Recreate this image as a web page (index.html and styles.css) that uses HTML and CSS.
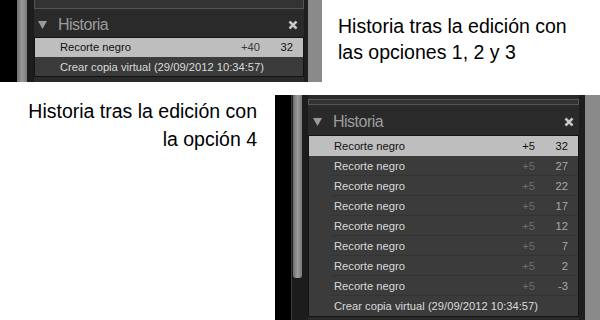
FILE: index.html
```html
<!DOCTYPE html>
<html lang="es">
<head>
    <meta charset="UTF-8">
    <meta name="viewport" content="width=device-width, initial-scale=1.0">
    <title>Historia</title>
    <link rel="stylesheet" href="styles.css">
</head>
<body>
    <div class="page">
        <div class="band band-top">
            <div class="shot shot-top">
                <div class="edge"></div>
                <div class="scroll"><div class="thumb"></div></div>
                <div class="panel">
                    <div class="prevbar"></div>
                    <div class="header">
                        <svg class="tri" width="9" height="8" viewBox="0 0 9 8"><polygon points="0,0 9,0 4.5,8" fill="#9a9a9a"/></svg>
                        <span class="title">Historia</span>
                        <svg class="close" width="10" height="10" viewBox="0 0 10 10"><path d="M1.5 1.5 L8.5 8.5 M8.5 1.5 L1.5 8.5" stroke="#555" stroke-width="3.4"/><path d="M1.5 1.5 L8.5 8.5 M8.5 1.5 L1.5 8.5" stroke="#cfcfcf" stroke-width="2.2"/></svg>
                    </div>
                    <div class="list">
                        <div class="row sel"><div class="cell"><span class="name">Recorte negro</span><span class="val">+40</span><span class="step">32</span></div></div>
                        <div class="row"><div class="cell last"><span class="name">Crear copia virtual (29/09/2012 10:34:57)</span></div></div>
                    </div>
                </div>
                <div class="side"></div>
            </div>
            <div class="caption">Historia tras la edición con<br>las opciones 1, 2 y 3</div>
        </div>

        <div class="band band-bottom">
            <div class="caption">Historia tras la edición con<br>la opción 4</div>
            <div class="shot shot-bottom">
                <div class="edge"></div>
                <div class="scroll"><div class="thumb"></div></div>
                <div class="panel">
                    <div class="prevbar"></div>
                    <div class="header">
                        <svg class="tri" width="9" height="8" viewBox="0 0 9 8"><polygon points="0,0 9,0 4.5,8" fill="#9a9a9a"/></svg>
                        <span class="title">Historia</span>
                        <svg class="close" width="10" height="10" viewBox="0 0 10 10"><path d="M1.5 1.5 L8.5 8.5 M8.5 1.5 L1.5 8.5" stroke="#555" stroke-width="3.4"/><path d="M1.5 1.5 L8.5 8.5 M8.5 1.5 L1.5 8.5" stroke="#cfcfcf" stroke-width="2.2"/></svg>
                    </div>
                    <div class="list">
                        <div class="row sel"><div class="cell"><span class="name">Recorte negro</span><span class="val">+5</span><span class="step">32</span></div></div>
                        <div class="row"><div class="cell"><span class="name">Recorte negro</span><span class="val">+5</span><span class="step">27</span></div></div>
                        <div class="row"><div class="cell"><span class="name">Recorte negro</span><span class="val">+5</span><span class="step">22</span></div></div>
                        <div class="row"><div class="cell"><span class="name">Recorte negro</span><span class="val">+5</span><span class="step">17</span></div></div>
                        <div class="row"><div class="cell"><span class="name">Recorte negro</span><span class="val">+5</span><span class="step">12</span></div></div>
                        <div class="row"><div class="cell"><span class="name">Recorte negro</span><span class="val">+5</span><span class="step">7</span></div></div>
                        <div class="row"><div class="cell"><span class="name">Recorte negro</span><span class="val">+5</span><span class="step">2</span></div></div>
                        <div class="row"><div class="cell"><span class="name">Recorte negro</span><span class="val">+5</span><span class="step">-3</span></div></div>
                        <div class="row"><div class="cell last"><span class="name">Crear copia virtual (29/09/2012 10:34:57)</span></div></div>
                    </div>
                </div>
                <div class="side"></div>
            </div>
        </div>
    </div>
</body>
</html>
```

FILE: styles.css
```css
body {
    margin: 0;
    background-color: #ffffff;
    font-family: "Liberation Sans", Arial, sans-serif;
}
.page {
    width: 600px;
    height: 320px;
    overflow: hidden;
}
.band {
    display: flex;
}
.band-top {
    height: 82px;
}
.band-bottom {
    height: 225px;
    margin-top: 13px;
}
.caption {
    font-size: 19.5px;
    color: #000000;
}
.band-top .caption {
    line-height: 26px;
    padding: 13px 0 0 16px;
}
.band-bottom .caption {
    width: 257px;
    flex: none;
    line-height: 28px;
    padding: 2px 18px 0 0;
    text-align: right;
}

/* captura de Lightroom */
.shot {
    display: flex;
    flex: none;
    background-color: #1e1e1e;
}
.edge {
    background-color: #000000;
}
.shot-top .edge {
    width: 17px;
}
.shot-bottom .edge {
    width: 16px;
}
.scroll {
    display: flex;
    flex: none;
    box-sizing: border-box;
    width: 17px;
    background-color: #1c1c1c;
}
.shot-top .scroll {
    padding-right: 7px;
}
.shot-bottom .scroll {
    border-left: 1px solid #3c3c3c;
    padding: 0 6px 0 1px;
}
.thumb {
    flex: 1;
    background: linear-gradient(to right, #6e6e6e, #9a9a9a 50%, #7a7a7a);
}
.shot-bottom .thumb {
    height: 183px;
    border-radius: 0 0 3px 3px;
}
.panel {
    display: flex;
    flex-direction: column;
    background-color: #2a2a2a;
}
.shot-top .panel {
    width: 270px;
}
.shot-bottom .panel {
    width: 271px;
    padding-top: 4px;
}
.prevbar {
    box-sizing: border-box;
    border: 1px solid #555555;
    background-color: #333333;
}
.shot-top .prevbar {
    height: 9px;
    border-top: none;
}
.shot-bottom .prevbar {
    height: 6px;
}
.header {
    display: flex;
    align-items: center;
    box-sizing: border-box;
    padding: 3px 6px 0 5px;
}
.shot-top .header {
    height: 28px;
    padding-left: 4px;
}
.shot-bottom .header {
    height: 30px;
    padding-right: 5px;
}
.tri {
    margin-right: 11px;
}
.title {
    flex: 1;
    font-size: 16px;
    letter-spacing: -0.5px;
    color: #9c9c9c;
}
.list {
    border: 1px solid #141414;
    font-size: 11.2px;
}
.row {
    padding-left: 22px;
    background-color: #3b3b3b;
    color: #dadada;
}
.cell {
    display: flex;
    align-items: center;
    height: 19px;
    padding: 0 10px 0 3px;
    border-bottom: 1px solid #333333;
}
.shot-top .cell {
    height: 18px;
}
.cell.last {
    border-bottom: none;
    height: 20px;
}
.shot-top .cell.last {
    height: 19px;
}
.name {
    flex: 1;
    white-space: nowrap;
}
.val {
    width: 30px;
    text-align: right;
    color: #6c6c6c;
}
.step {
    width: 33px;
    text-align: right;
    color: #a8a8a8;
}
.row.sel {
    background-color: #bebebe;
    color: #111111;
}
.row.sel .cell {
    border-bottom-color: #bebebe;
}
.row.sel .val {
    color: #151515;
}
.row.sel .step {
    color: #111111;
}
.shot-top .row.sel .val {
    color: #3a3a3a;
}
.side {
    flex: none;
    background-color: #8a8a8a;
}
.shot-top .side {
    width: 14px;
    border-left: 4px solid #1e1e1e;
}
.shot-bottom .side {
    width: 15px;
    border-left: 6px solid #1e1e1e;
}
```
